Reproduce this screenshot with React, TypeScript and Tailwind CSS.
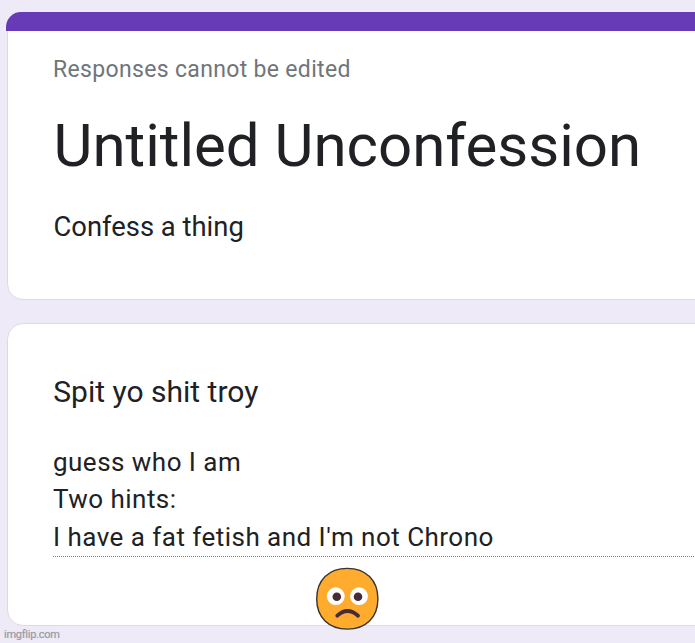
import React from 'react'

function WorriedFace() {
  return (
    <svg viewBox="0 0 64 64" className="h-16 w-16" aria-hidden="true">
      <path
        d="M32.3 1.4 C50.8 1.4 62.9 13 62.9 32 C62.9 50.4 50.8 62.1 32.3 62.1 C13.8 62.1 1.7 50.4 1.7 32 C1.7 13 13.8 1.4 32.3 1.4Z"
        fill="#ffab2e"
        stroke="#38342f"
        strokeWidth="1.4"
      />
      <circle cx="20.8" cy="29.2" r="8.9" fill="#fff" />
      <circle cx="44" cy="29.2" r="8.9" fill="#fff" />
      <circle cx="21.8" cy="29.8" r="4.3" fill="#472c33" />
      <circle cx="43" cy="29.8" r="4.3" fill="#472c33" />
      <path d="M22.3 48.7 Q32.4 39.4 43 48.7" fill="none" stroke="#472c33" strokeWidth="3.8" strokeLinecap="round" />
    </svg>
  )
}

export default function App() {
  return (
    <main className="relative h-[643px] w-[695px] overflow-hidden bg-[#eeeaf7] pt-3 pl-[7px] font-['Roboto',sans-serif] text-[#202124]">
      <section className="h-[288px] w-[720px] rounded-2xl border border-[#dadce0] bg-white">
        <div className="-mt-px -ml-0.5 h-[19px] rounded-tl-[15px] bg-[#673ab7]" />
        <div className="pl-[45px]">
          <p className="pt-[23px] text-[23px] leading-8 tracking-[0.33px] text-[#70757a]">Responses cannot be edited</p>
          <h1 className="mt-[22px] pl-[0.5px] text-[60px] leading-[76px] whitespace-nowrap">Untitled Unconfession</h1>
          <p className="mt-[23px] pl-[0.5px] text-[27.4px] leading-10">Confess a thing</p>
        </div>
      </section>
      <section className="mt-[23px] h-[303px] w-[720px] rounded-2xl border border-[#dadce0] bg-white pt-[45px] pl-[45px]">
        <h2 className="pl-[0.3px] text-[30px] leading-[46px]">Spit yo shit troy</h2>
        <div className="mt-7 h-[114px] border-b border-dotted border-[#808080] text-[26px] tracking-[0.47px]">
          <p className="leading-[38px]">guess who I am</p>
          <p className="leading-9">Two hints:</p>
          <p className="leading-10">I have a fat fetish and I'm not Chrono</p>
        </div>
      </section>
      <div className="absolute top-[567px] left-[315px]">
        <WorriedFace />
      </div>
      <span className="absolute bottom-0 left-1 text-[11px] leading-[17px] tracking-[-0.25px] text-[#9c99a1] [text-shadow:0_0_1px_#c4c1c9]">
        imgflip.com
      </span>
    </main>
  )
}
